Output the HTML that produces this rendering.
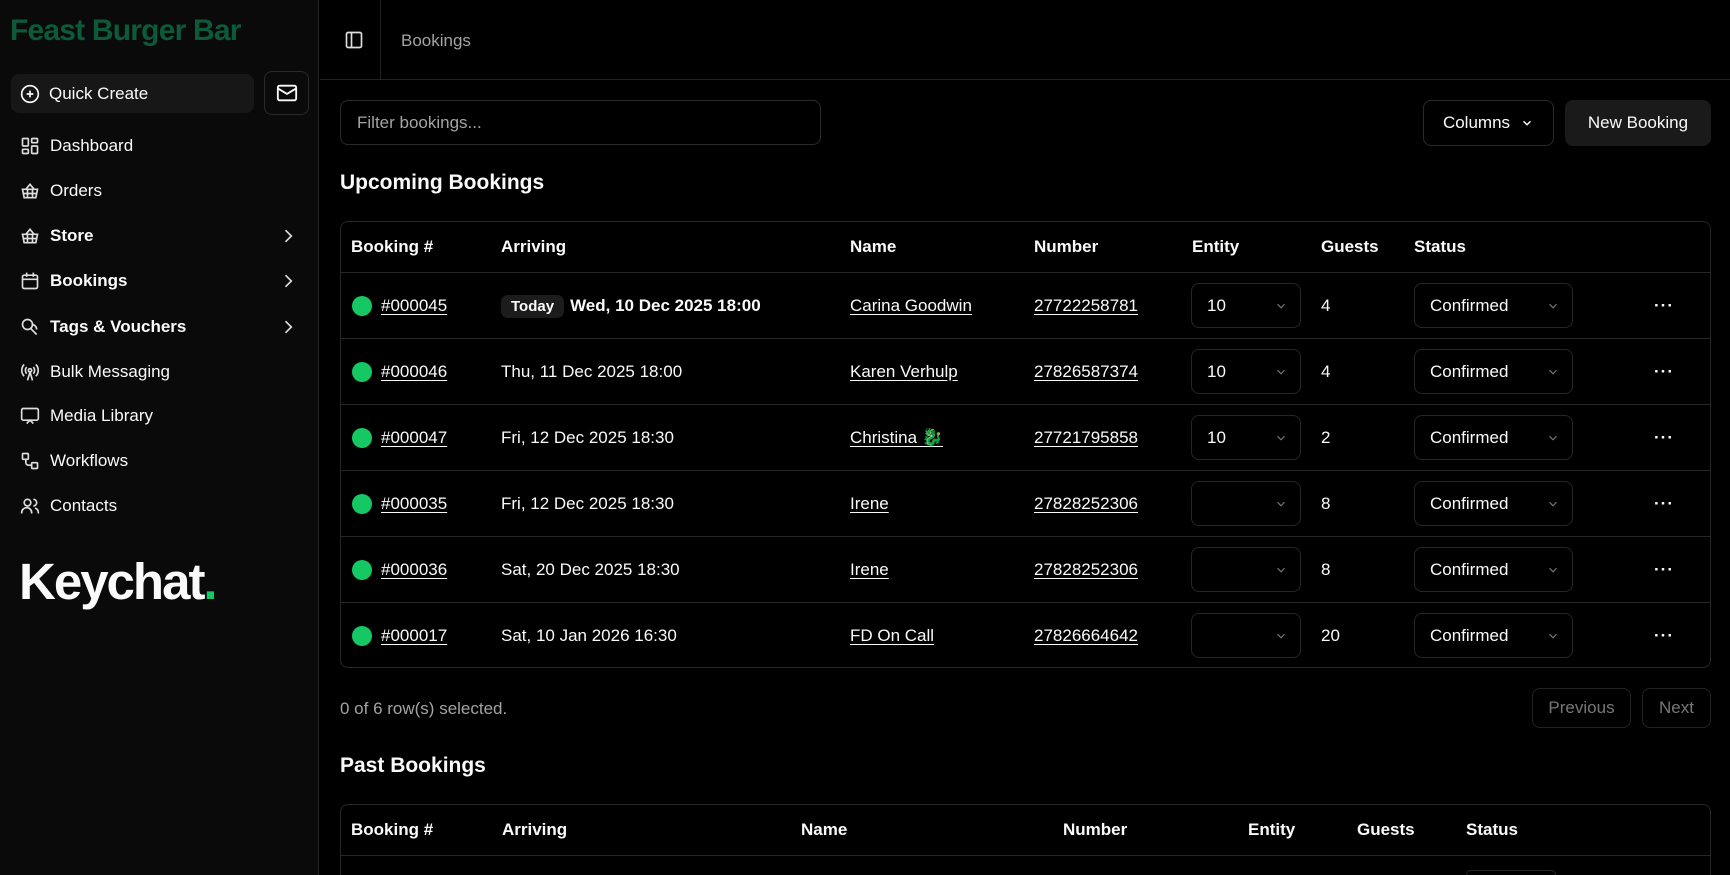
<!DOCTYPE html>
<html style="overflow:hidden;width:1730px;height:875px"><head><meta charset="utf-8"><style>
*{box-sizing:border-box;margin:0;padding:0}
body{width:1730px;height:875px;overflow:hidden;background:#000;color:#fafafa;font-family:"Liberation Sans",sans-serif;font-size:17px;position:relative}
.sb{position:absolute;left:0;top:0;width:319px;height:875px;background:#0a0a0a;border-right:1px solid #222}
.abs{position:absolute}
.title{left:10px;top:14px;font-size:30px;font-weight:700;color:#0d5a3a;letter-spacing:-0.8px}
.qc{left:11px;top:74px;width:243px;height:39px;background:#171717;border-radius:8px;display:flex;align-items:center;padding-left:38px;font-size:17px}
.mail{left:264px;top:71px;width:45px;height:44px;border:1px solid #2a2a2a;border-radius:8px;display:flex;align-items:center;justify-content:center}
.nav{left:20px;width:280px;height:30px;display:flex;align-items:center}
.nav svg{width:20px;height:20px;margin-right:10px}
.nav .chev{position:absolute;right:2px;margin:0}
.b{font-weight:700}
.logo{left:19px;top:552px;font-size:51px;font-weight:700;letter-spacing:-2px}
.hdr{left:320px;top:0;width:1410px;height:80px;border-bottom:1px solid #222}
.inp{left:340px;top:100px;width:481px;height:45px;border:1px solid #2a2a2a;border-radius:8px;padding-left:16px;line-height:43px;color:#a3a3a3}
.btn{border:1px solid #2a2a2a;border-radius:8px;display:flex;align-items:center;justify-content:center;font-size:17px}
h2{position:absolute;font-size:21px;font-weight:600}
.tbl{position:absolute;left:340px;width:1371px;border:1px solid #262626;border-radius:8px;overflow:hidden}
.row{position:relative;height:66px;border-top:1px solid #262626}
.hrow{position:relative;height:50px}
.c{position:absolute;top:50%;transform:translateY(-50%);white-space:nowrap}
.hrow .c{font-weight:600}
u{text-underline-offset:3px}
.dot{width:20px;height:20px;border-radius:50%;background:#16c864}
.sel{position:absolute;top:10px;height:45px;border:1px solid #262626;border-radius:8px;padding-left:15px;line-height:43px}
.sel svg{position:absolute;right:12px;top:15px}
.today{background:#1c1c1c;border-radius:7px;padding:3px 10px;font-size:15px;margin-right:6px;font-weight:600}
</style></head><body>
<div class="sb">
<div class="abs title">Feast Burger Bar</div>
<div class="abs qc"><svg class="abs" style="left:9px;top:10px" width="20" height="20" viewBox="0 0 24 24" fill="none" stroke="#fafafa" stroke-width="2"><circle cx="12" cy="12" r="10"/><path d="M12 8v8M8 12h8"/></svg>Quick Create</div>
<div class="abs mail"><svg width="22" height="22" viewBox="0 0 24 24" fill="none" stroke="#fafafa" stroke-width="2"><rect x="2" y="4" width="20" height="16" rx="2"/><path d="M22 7l-10 6L2 7"/></svg></div>
<div class="abs nav" style="top:131px"><svg viewBox="0 0 24 24" fill="none" stroke="#ddd" stroke-width="2"><rect x="3" y="3" width="7" height="9" rx="1"/><rect x="14" y="3" width="7" height="5" rx="1"/><rect x="14" y="12" width="7" height="9" rx="1"/><rect x="3" y="16" width="7" height="5" rx="1"/></svg>Dashboard</div>
<div class="abs nav" style="top:176px"><svg viewBox="0 0 24 24" fill="none" stroke="#ddd" stroke-width="2"><path d="M3 10h18l-2 10H5z M7 10l5-6 5 6 M9 10v10M15 10v10M4 15h16"/></svg>Orders</div>
<div class="abs nav b" style="top:221px"><svg viewBox="0 0 24 24" fill="none" stroke="#ddd" stroke-width="2"><path d="M3 10h18l-2 10H5z M7 10l5-6 5 6 M9 10v10M15 10v10M4 15h16"/></svg>Store<svg class="chev" width="16" height="16" viewBox="0 0 24 24" fill="none" stroke="#ddd" stroke-width="2"><path d="M9 5l7 7-7 7"/></svg></div>
<div class="abs nav b" style="top:266px"><svg viewBox="0 0 24 24" fill="none" stroke="#ddd" stroke-width="2"><rect x="3" y="5" width="18" height="16" rx="2"/><path d="M8 2v5M16 2v5M3 10h18M8 14h.01M12 14h.01M16 14h.01M8 18h.01M12 18h.01M16 18h.01"/></svg>Bookings<svg class="chev" width="16" height="16" viewBox="0 0 24 24" fill="none" stroke="#ddd" stroke-width="2"><path d="M9 5l7 7-7 7"/></svg></div>
<div class="abs nav b" style="top:312px"><svg viewBox="0 0 24 24" fill="none" stroke="#ddd" stroke-width="2"><circle cx="9" cy="9" r="6"/><path d="M12 13l8 8M14 9a6 6 0 0 1 6 6"/></svg>Tags &amp; Vouchers<svg class="chev" width="16" height="16" viewBox="0 0 24 24" fill="none" stroke="#ddd" stroke-width="2"><path d="M9 5l7 7-7 7"/></svg></div>
<div class="abs nav" style="top:357px"><svg viewBox="0 0 24 24" fill="none" stroke="#ddd" stroke-width="2"><circle cx="12" cy="10" r="2"/><path d="M8 6a6 6 0 0 0 0 8M16 6a6 6 0 0 1 0 8M5 3a10 10 0 0 0 0 14M19 3a10 10 0 0 1 0 14M12 12l-3 10M12 12l3 10"/></svg>Bulk Messaging</div>
<div class="abs nav" style="top:401px"><svg viewBox="0 0 24 24" fill="none" stroke="#ddd" stroke-width="2"><rect x="2" y="3" width="20" height="14" rx="2"/><path d="M8 21l4-4 4 4"/></svg>Media Library</div>
<div class="abs nav" style="top:446px"><svg viewBox="0 0 24 24" fill="none" stroke="#ddd" stroke-width="2"><rect x="3" y="3" width="7" height="7" rx="1"/><rect x="14" y="14" width="7" height="7" rx="1"/><path d="M7 10v4a3 3 0 0 0 3 3h4"/></svg>Workflows</div>
<div class="abs nav" style="top:491px"><svg viewBox="0 0 24 24" fill="none" stroke="#ddd" stroke-width="2"><circle cx="9" cy="8" r="4"/><path d="M2 21v-1a6 6 0 0 1 12 0v1M16 4a4 4 0 0 1 0 8M22 21v-1a6 6 0 0 0-4-5.6"/></svg>Contacts</div>
<div class="abs logo">Keychat<span style="color:#16c864">.</span></div>
</div>
<div class="abs hdr">
<svg class="abs" style="left:24px;top:30px" width="20" height="20" viewBox="0 0 24 24" fill="none" stroke="#ddd" stroke-width="2"><rect x="3" y="3" width="18" height="18" rx="2"/><path d="M9 3v18"/></svg>
<div class="abs" style="left:60px;top:0;width:1px;height:79px;background:#222"></div>
<div class="abs" style="left:81px;top:31px;color:#a3a3a3">Bookings</div>
</div>
<div class="abs inp">Filter bookings...</div>
<div class="abs btn" style="left:1423px;top:100px;width:131px;height:46px">Columns <svg style="margin-left:10px" width="14" height="14" viewBox="0 0 24 24" fill="none" stroke="#fafafa" stroke-width="2.5"><path d="M6 9l6 6 6-6"/></svg></div>
<div class="abs btn" style="left:1565px;top:100px;width:146px;height:46px;background:#1a1a1a;border-color:#1a1a1a">New Booking</div>
<h2 style="left:340px;top:171px">Upcoming Bookings</h2>
<div class="tbl" style="top:221px;height:447px">
<div class="hrow"><span class="c" style="left:10px">Booking #</span><span class="c" style="left:160px">Arriving</span><span class="c" style="left:509px">Name</span><span class="c" style="left:693px">Number</span><span class="c" style="left:851px">Entity</span><span class="c" style="left:980px">Guests</span><span class="c" style="left:1073px">Status</span></div>
<div id="rows"></div>
</div>
<div class="abs" style="left:340px;top:699px;color:#a3a3a3">0 of 6 row(s) selected.</div>
<div class="abs btn" style="left:1532px;top:688px;width:99px;height:40px;color:#777;border-color:#222">Previous</div>
<div class="abs btn" style="left:1642px;top:688px;width:69px;height:40px;color:#777;border-color:#222">Next</div>
<h2 style="left:340px;top:754px">Past Bookings</h2>
<div class="tbl" style="top:804px;height:71px;border-bottom:none;border-radius:8px 8px 0 0">
<div class="hrow"><span class="c" style="left:10px">Booking #</span><span class="c" style="left:161px">Arriving</span><span class="c" style="left:460px">Name</span><span class="c" style="left:722px">Number</span><span class="c" style="left:907px">Entity</span><span class="c" style="left:1016px">Guests</span><span class="c" style="left:1125px">Status</span></div>
<div style="position:relative;height:20px;border-top:1px solid #262626"><div style="position:absolute;left:1125px;top:14px;width:90px;height:5px;border:1px solid #262626;border-bottom:none;border-radius:8px 8px 0 0"></div></div>
</div>
<script>
var d=[["#000045","","Carina Goodwin","27722258781","10","4"],["#000046","Thu, 11 Dec 2025 18:00","Karen Verhulp","27826587374","10","4"],["#000047","Fri, 12 Dec 2025 18:30","Christina 🐉","27721795858","10","2"],["#000035","Fri, 12 Dec 2025 18:30","Irene","27828252306","","8"],["#000036","Sat, 20 Dec 2025 18:30","Irene","27828252306","","8"],["#000017","Sat, 10 Jan 2026 16:30","FD On Call","27826664642","","20"]];
var ch='<svg width="14" height="14" viewBox="0 0 24 24" fill="none" stroke="#777" stroke-width="2"><path d="M6 9l6 6 6-6"/></svg>';
var h='';d.forEach(function(r,i){var arr=i==0?'<span class="today">Today</span><b>Wed, 10 Dec 2025 18:00</b>':r[1];
h+='<div class="row"><span class="c dot" style="left:11px"></span><span class="c" style="left:40px"><u>'+r[0]+'</u></span><span class="c" style="left:160px">'+arr+'</span><span class="c" style="left:509px"><u>'+r[2]+'</u></span><span class="c" style="left:693px"><u>'+r[3]+'</u></span><div class="sel" style="left:850px;width:110px">'+r[4]+ch+'</div><span class="c" style="left:980px">'+r[5]+'</span><div class="sel" style="left:1073px;width:159px">Confirmed'+ch+'</div><span class="c" style="left:1313px;font-weight:700;letter-spacing:1px">···</span></div>';});
document.getElementById('rows').innerHTML=h;
</script>
</body></html>
